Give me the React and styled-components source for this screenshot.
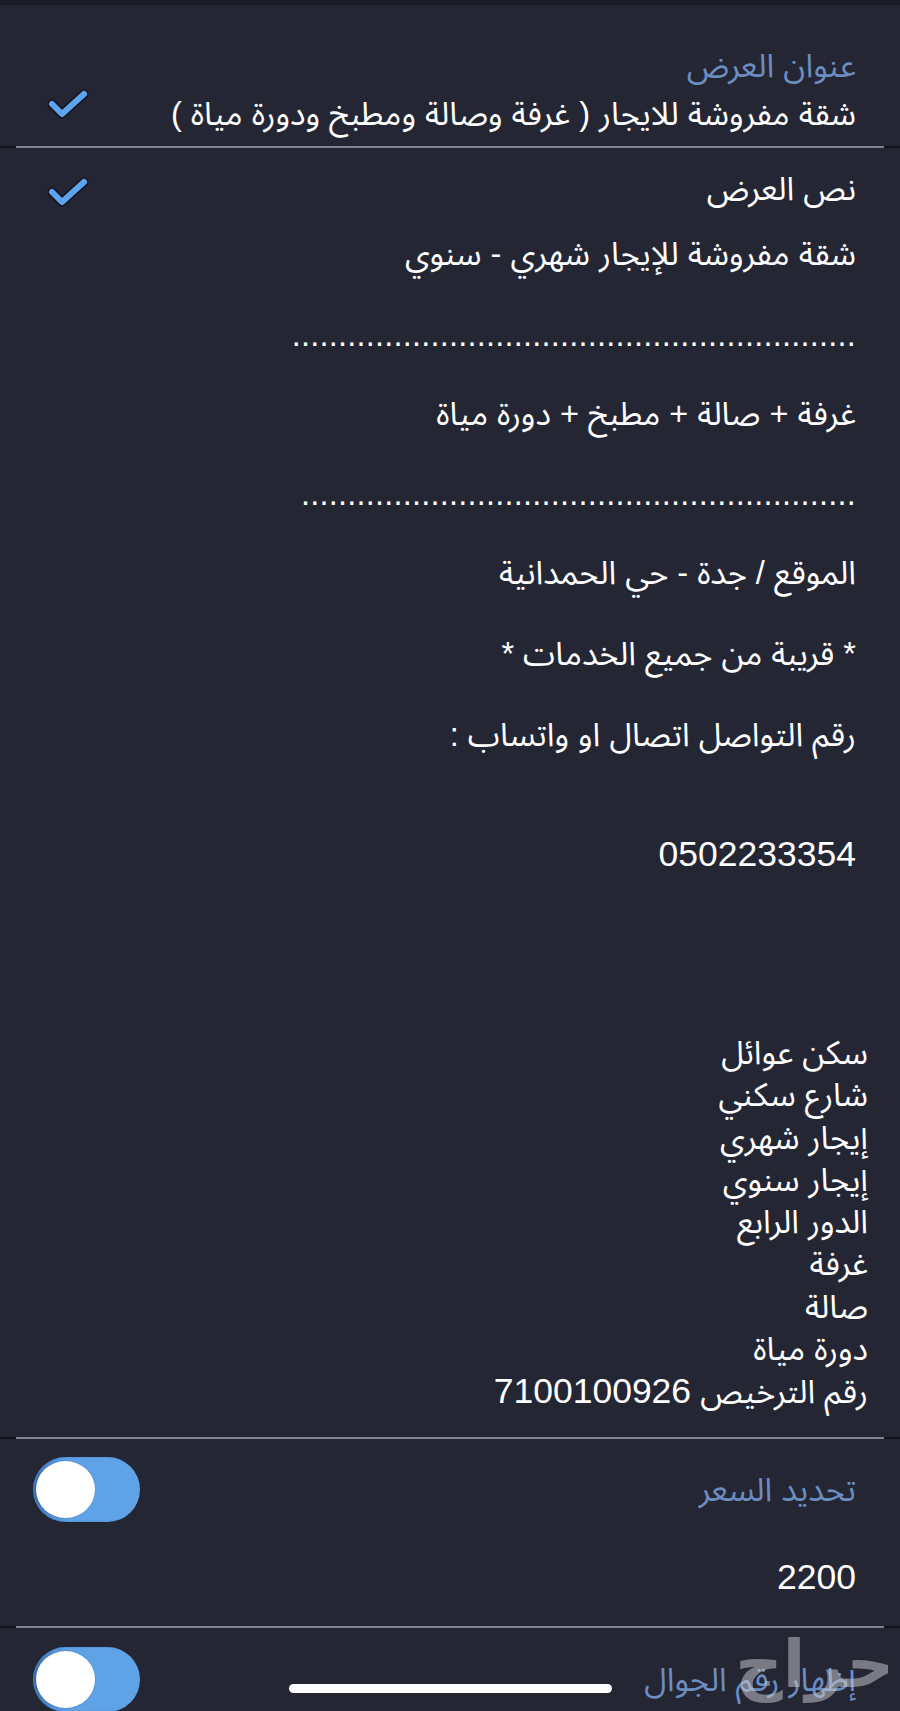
import React from 'react';
import styled, { createGlobalStyle } from 'styled-components';

const FONT = `"Liberation Sans", "Noto Sans Arabic", "DejaVu Sans", sans-serif`;

const Global = createGlobalStyle`
  html, body { margin: 0; padding: 0; background: #252634; }
  #root { width: 900px; }
`;

const Screen = styled.div`
  position: relative;
  width: 900px;
  height: 1711px;
  overflow: hidden;
  background: #252634;
  direction: rtl;
  font-family: ${FONT};
  color: #ffffff;
`;

const StatusStrip = styled.div`
  height: 5px;
  background: #1b1c26;
`;

const Section = styled.section`
  display: flex;
  flex-direction: column;
  padding: ${p => p.$pad};
`;

const Row = styled.div`
  display: flex;
  align-items: ${p => p.$align || 'center'};
  justify-content: space-between;
`;

const Column = styled.div`
  display: flex;
  flex-direction: column;
`;

const Label = styled.div`
  font-size: 32.5px;
  line-height: 48px;
  color: ${p => (p.$muted ? '#6b8dc0' : '#ffffff')};
  white-space: nowrap;
`;

const Para = styled.p`
  margin: ${p => p.$top}px 0 0 0;
  font-size: 32.5px;
  line-height: 42px;
  white-space: nowrap;
`;

const Num = styled.span`
  font-size: 35.5px;
`;

const Dots = styled.p`
  margin: ${p => p.$top}px 0 0 0;
  font-size: 32.5px;
  line-height: 42px;
  letter-spacing: ${p => p.$spacing}px;
  white-space: nowrap;
`;

const Block = styled.div`
  margin-top: ${p => p.$top}px;
  margin-right: -12px;
  font-size: 32.5px;
  line-height: 42.25px;
`;

const BlockLine = styled.div`
  white-space: nowrap;
`;

const Divider = styled.div`
  position: relative;
  height: 2px;
  background: #121219;
  &::after {
    content: '';
    position: absolute;
    left: 16px;
    right: 16px;
    top: 0;
    height: 2px;
    background: #7e8597;
  }
`;

const CheckSvg = styled.svg`
  flex: none;
  width: 42px;
  height: 31px;
  margin: ${p => p.$margin || '0'};
`;

const Check = ({ margin }) => (
  <CheckSvg $margin={margin} viewBox="0 0 42 31">
    <polyline points="5,15 15,25 37,5" fill="none" stroke="#121520" strokeWidth="9" strokeLinecap="round" strokeLinejoin="round" />
    <polyline points="5,15 15,25 37,5" fill="none" stroke="#5ea4ec" strokeWidth="6" strokeLinecap="round" strokeLinejoin="round" />
  </CheckSvg>
);

const Track = styled.div`
  position: relative;
  flex: none;
  width: 107px;
  height: 65px;
  border-radius: 33px;
  background: #5fa2e6;
  box-shadow: inset 3px 0 2px rgba(30, 80, 150, 0.45);
`;

const Knob = styled.div`
  position: absolute;
  left: 3px;
  top: 4px;
  width: 59px;
  height: 57px;
  border-radius: 50%;
  background: #ffffff;
  box-shadow: -1px 0 2px rgba(20, 40, 80, 0.5);
`;

const Toggle = () => (
  <Track>
    <Knob />
  </Track>
);

const HomeBar = styled.div`
  position: absolute;
  left: 289px;
  top: 1684px;
  width: 323px;
  height: 9px;
  border-radius: 5px;
  background: #ffffff;
`;

const Watermark = styled.div`
  position: absolute;
  right: 6px;
  top: 1634px;
  font-family: "DejaVu Sans", sans-serif;
  font-weight: bold;
  font-size: 66px;
  line-height: 62px;
  color: rgba(205, 205, 210, 0.5);
  pointer-events: none;
`;

const DOTS1 = '.'.repeat(61);
const DOTS2 = '.'.repeat(60);

const blockLines = [
  'سكن عوائل',
  'شارع سكني',
  'إيجار شهري',
  'إيجار سنوي',
  'الدور الرابع',
  'غرفة',
  'صالة',
  'دورة مياة',
];

export default function App() {
  return (
    <>
      <Global />
      <Screen>
        <StatusStrip />
        <Section $pad="37px 44px 8px 47px">
          <Row $align="flex-end">
            <Column>
              <Label $muted>عنوان العرض</Label>
              <Label>شقة مفروشة للايجار ( غرفة وصالة ومطبخ ودورة مياة )</Label>
            </Column>
            <Check margin="0 0 18px 0" />
          </Row>
        </Section>
        <Divider />
        <Section $pad="17px 44px 24px 47px">
          <Row>
            <Label>نص العرض</Label>
            <Check margin="6px 0 0 0" />
          </Row>
          <Para $top={20}>شقة مفروشة للإيجار شهري - سنوي</Para>
          <Dots $top={39} $spacing={0.22}>{DOTS1}</Dots>
          <Para $top={37}>غرفة + صالة + مطبخ + دورة مياة</Para>
          <Dots $top={38} $spacing={0.22}>{DOTS2}</Dots>
          <Para $top={37}>الموقع / جدة - حي الحمدانية</Para>
          <Para $top={39}>* قريبة من جميع الخدمات *</Para>
          <Para $top={39}>رقم التواصل اتصال او واتساب :</Para>
          <Para $top={77}><Num>0502233354</Num></Para>
          <Block $top={156}>
            {blockLines.map(l => (
              <BlockLine key={l}>{l}</BlockLine>
            ))}
            <BlockLine>رقم الترخيص <Num>7100100926</Num></BlockLine>
          </Block>
        </Section>
        <Divider />
        <Section $pad="18px 44px 27px 33px">
          <Row>
            <Label $muted>تحديد السعر</Label>
            <Toggle />
          </Row>
          <Para $top={34}><Num>2200</Num></Para>
        </Section>
        <Divider />
        <Section $pad="19px 44px 0 33px">
          <Row>
            <Label $muted>إظهار رقم الجوال</Label>
            <Toggle />
          </Row>
        </Section>
        <Watermark>حراج</Watermark>
        <HomeBar />
      </Screen>
    </>
  );
}
